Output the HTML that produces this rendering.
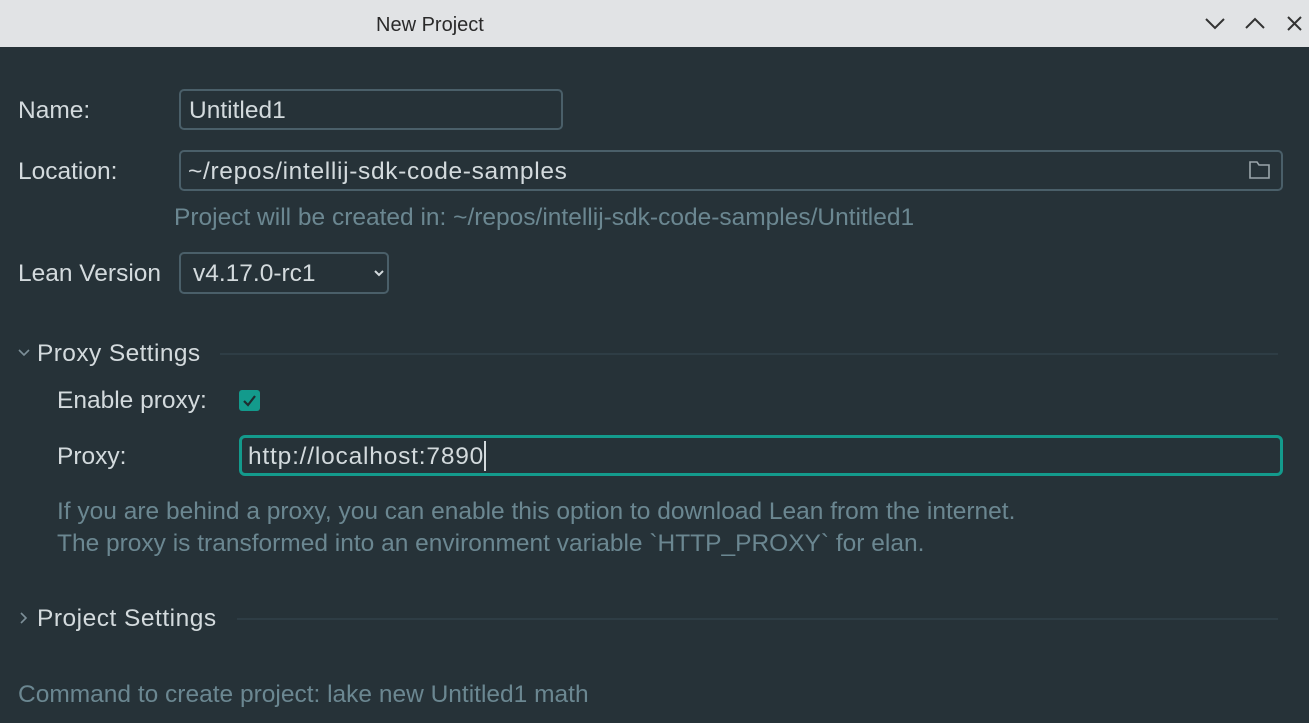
<!DOCTYPE html>
<html><head><meta charset="utf-8"><style>
*{margin:0;padding:0;box-sizing:border-box}
body{width:1309px;height:723px;background:#263238;font-family:"Liberation Sans",sans-serif;color:#d3dadd;overflow:hidden;position:relative}
.t{position:absolute;white-space:nowrap;font-size:24.5px;line-height:28px}
.h{color:#6b8791}
.box{position:absolute;border:2px solid #4a5f69;border-radius:5px}
.line{position:absolute;height:2px;background:#2e3d45}
</style></head><body>
<div style="position:absolute;left:0;top:0;width:1309px;height:47px;background:#e1e3e5"></div>
<div class="t" style="left:376px;top:11px;font-size:20px;color:#2a2a2a">New Project</div>
<svg style="position:absolute;left:1200px;top:10px" width="105" height="28" fill="none" stroke="#333" stroke-width="2">
<path d="M6 9 L15 18 L24 9"/><path d="M46 18 L55 9 L64 18"/><path d="M88 7 L101 20 M101 7 L88 20"/></svg>

<div class="t" style="left:18px;top:97px">Name:</div>
<div class="box" style="left:179px;top:89px;width:384px;height:41px"></div>
<div class="t" style="left:189px;top:97px">Untitled1</div>

<div class="t" style="left:18px;top:158px">Location:</div>
<div class="box" style="left:179px;top:150px;width:1104px;height:41px"></div>
<div class="t" style="left:188px;top:158px;letter-spacing:0.67px">~/repos/intellij-sdk-code-samples</div>
<svg style="position:absolute;left:1248px;top:159px" width="24" height="22" fill="none" stroke="#9aa5aa" stroke-width="1.6"><path d="M2 3 H9 L11 6 H21 V19 H2 Z"/></svg>
<div class="t h" style="left:174px;top:204px">Project will be created in: ~/repos/intellij-sdk-code-samples/Untitled1</div>

<div class="t" style="left:18px;top:260px">Lean Version</div>
<div class="box" style="left:179px;top:252px;width:210px;height:42px"></div>
<div class="t" style="left:193px;top:260px">v4.17.0-rc1</div>
<svg style="position:absolute;left:373px;top:268px" width="12" height="10" fill="none" stroke="#d3dadd" stroke-width="2"><path d="M2 3 L6 7 L10 3"/></svg>

<svg style="position:absolute;left:17px;top:347px" width="14" height="12" fill="none" stroke="#7d8f98" stroke-width="1.6"><path d="M2 3 L7 8 L12 3"/></svg>
<div class="t" style="left:37px;top:340px;letter-spacing:0.4px">Proxy Settings</div>
<div class="line" style="left:220px;top:353px;width:1058px"></div>

<div class="t" style="left:57px;top:387px">Enable proxy:</div>
<div style="position:absolute;left:239px;top:390px;width:21px;height:21px;background:#139a8c;border-radius:3px"></div>
<svg style="position:absolute;left:239px;top:390px" width="21" height="21" fill="none" stroke="#1e2c30" stroke-width="2.2"><path d="M5 11 L9 15 L16 6"/></svg>

<div class="t" style="left:57px;top:443px">Proxy:</div>
<div style="position:absolute;left:239px;top:435px;width:1044px;height:41px;border:3px solid #139a8c;border-radius:6px"></div>
<div class="t" style="left:248px;top:443px;letter-spacing:0.8px">http://localhost:7890</div>
<div style="position:absolute;left:484px;top:441px;width:2px;height:30px;background:#d3dadd"></div>

<div class="t h" style="left:57px;top:498px">If you are behind a proxy, you can enable this option to download Lean from the internet.</div>
<div class="t h" style="left:57px;top:530px">The proxy is transformed into an environment variable `HTTP_PROXY` for elan.</div>

<svg style="position:absolute;left:18px;top:611px" width="12" height="14" fill="none" stroke="#7d8f98" stroke-width="1.6"><path d="M3 2 L8 7 L3 12"/></svg>
<div class="t" style="left:37px;top:605px;letter-spacing:0.5px">Project Settings</div>
<div class="line" style="left:237px;top:618px;width:1041px"></div>

<div class="t h" style="left:18px;top:681px">Command to create project: lake new Untitled1 math</div>
</body></html>
